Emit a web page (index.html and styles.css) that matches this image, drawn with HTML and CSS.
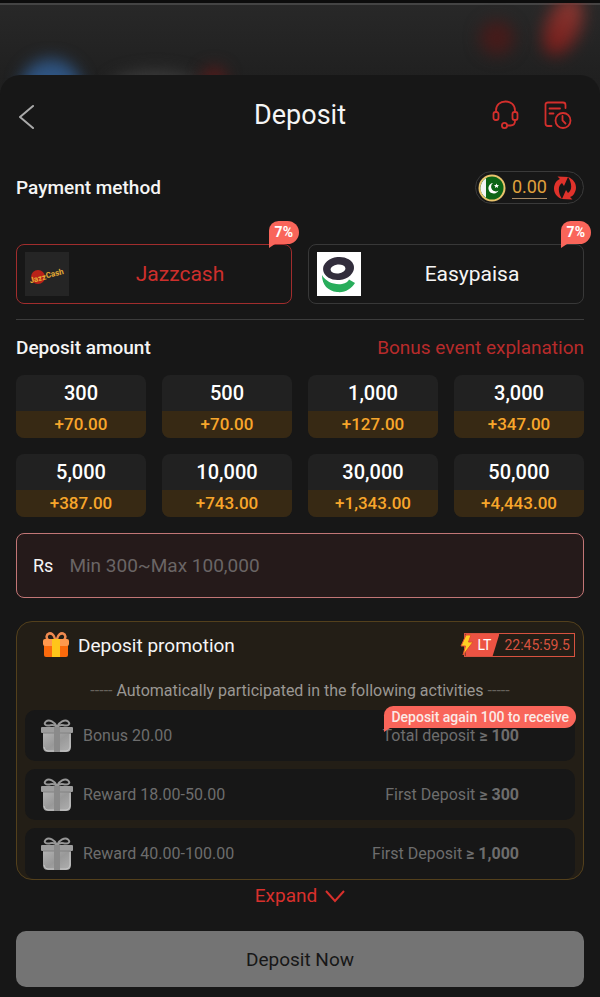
FILE: index.html
```html
<!DOCTYPE html>
<html lang="en">
<head>
    <meta charset="UTF-8">
    <meta name="viewport" content="width=device-width, initial-scale=1.0">
    <title>Deposit</title>
    <link rel="stylesheet" href="styles.css">
</head>
<body>
    <!-- Shared drawings -->
    <svg class="defs" aria-hidden="true">
        <defs>
            <linearGradient id="silver" x1="0" y1="0" x2="1" y2="1">
                <stop offset="0" stop-color="#b4b4b4"/>
                <stop offset="0.5" stop-color="#999"/>
                <stop offset="1" stop-color="#b0b0b0"/>
            </linearGradient>
        </defs>
        <symbol id="gift-grey" viewBox="0 0 32 34">
            <path d="M16 8C14 3 8 0 5 2.500C2 5 5 7 8 6.500C11 6 13 5 16 8C18 3 24 0 27 2.500C30 5 27 7 24 6.500C21 6 19 5 16 8Z" fill="none" stroke="#979797" stroke-width="2"/>
            <path d="M2 13H30V28Q30 33 25 33H7Q2 33 2 28Z" fill="url(#silver)"/>
            <path d="M3 28Q3.500 32 7 32H25Q28.500 32 29 28V15" fill="none" stroke="#c6c6c6" stroke-width="1"/>
            <rect x="0" y="8" width="32" height="6" rx="1" fill="#9d9d9d"/>
            <path d="M2 14H30" stroke="#828282" stroke-width="1"/>
            <rect x="13" y="8" width="6" height="25" fill="#8a8a8a"/>
        </symbol>
    </svg>

    <div class="backdrop" aria-hidden="true">
        <span class="glow glow-blue"></span>
        <span class="glow glow-grey"></span>
        <span class="glow glow-small"></span>
        <span class="glow glow-red"></span>
        <span class="glow glow-bright"></span>
    </div>

    <main class="sheet">
        <header class="top">
            <button class="icon-btn back" type="button" aria-label="Back">
                <svg width="20" height="28" viewBox="0 0 20 28"><path d="M17 5L4 16L17 27" fill="none" stroke="#aaa" stroke-width="2" stroke-linecap="round" stroke-linejoin="round"/></svg>
            </button>
            <h1>Deposit</h1>
            <div class="top-actions">
                <button class="icon-btn" type="button" aria-label="Support">
                    <svg width="28" height="30" viewBox="0 0 28 30" fill="none" stroke="#d32f2c" stroke-width="1.800" stroke-linecap="round">
                        <path d="M4 12V10.500C4 5 8 1.500 13.500 1.500S23 5 23 10.500V12"/>
                        <rect x="1.500" y="12" width="5" height="8" rx="2"/>
                        <rect x="20.500" y="12" width="5" height="8" rx="2"/>
                        <path d="M23 20V21Q23 25.500 18.500 25.500H15.500"/>
                        <circle cx="12.500" cy="25.500" r="2.600"/>
                    </svg>
                </button>
                <button class="icon-btn" type="button" aria-label="History">
                    <svg width="28" height="30" viewBox="0 0 28 30" fill="none" stroke="#d32f2c" stroke-width="1.800" stroke-linecap="round">
                        <path d="M7.500 26H4Q1.500 26 1.500 23.500V4.500Q1.500 2.500 4 2.500H19Q21.500 2.500 21.500 5V8"/>
                        <path d="M5.500 8.500H16M5.500 13.500H9.500"/>
                        <circle cx="19" cy="20.500" r="7.500"/>
                        <path d="M18.500 16V20.500L21.500 23.500"/>
                    </svg>
                </button>
            </div>
        </header>

        <section class="row payment-head">
            <h2>Payment method</h2>
            <div class="balance">
                <svg width="28" height="28" viewBox="0 0 28 28">
                    <circle cx="14" cy="14" r="13.500" fill="#e9c36c"/>
                    <circle cx="14" cy="14" r="11.500" fill="#0c6416"/>
                    <path d="M8 4.200A11.500 11.500 0 0 0 8 23.800Z" fill="#f4f4f4"/>
                    <path d="M15 9A5.300 5.300 0 1 0 20.500 16.500A4.600 4.600 0 1 1 15 9Z" fill="#fff"/>
                    <path d="M18.500 9.500L19.200 11.100L21 11.300L19.700 12.400L20 14L18.500 13.100L17 14L17.300 12.400L16 11.300L17.800 11.100Z" fill="#fff"/>
                </svg>
                <span class="balance-value">0.00</span>
                <button class="icon-btn" type="button" aria-label="Refresh balance">
                    <svg width="24" height="24" viewBox="0 0 24 24" fill="#e0322b">
                        <path id="arrow" d="M9 23C1 20 -1 12 3 6C4 4.500 5.500 3.500 7 3L4.500 0.500L15 1L11 10L9 7C4.500 10 5 17 9 23Z"/>
                        <use href="#arrow" transform="rotate(180 12 12)"/>
                    </svg>
                </button>
            </div>
        </section>

        <section class="methods">
            <button class="method selected" type="button">
                <svg class="logo" width="44" height="44" viewBox="0 0 44 44">
                    <rect width="44" height="44" fill="#252525"/>
                    <ellipse cx="13" cy="25" rx="7" ry="7" fill="#b92219"/>
                    <g transform="rotate(-14 22 24)" font-family="Roboto, sans-serif" font-weight="700" fill="#e6ad35">
                        <text x="4" y="27" font-size="8">Jazz</text>
                        <text x="21" y="26" font-size="8">Cash</text>
                    </g>
                </svg>
                <span class="method-name">Jazzcash</span>
                <span class="rate">7%</span>
            </button>
            <button class="method" type="button">
                <svg class="logo" width="44" height="44" viewBox="0 0 44 44">
                    <rect width="44" height="44" fill="#fff"/>
                    <ellipse cx="21.500" cy="16.500" rx="15.500" ry="11.500" fill="#322d3c" transform="rotate(-6 21 16)"/>
                    <ellipse cx="21" cy="17" rx="7.500" ry="4.500" fill="#fff" transform="rotate(-6 21 17)"/>
                    <path fill="#28ad5b" d="M5 23C9 30 17 33 25 32C29 31 31 29.500 32 27.500L38 31C34 37 28 41 20 40C11 39 5 33 5 23Z"/>
                </svg>
                <span class="method-name">Easypaisa</span>
                <span class="rate">7%</span>
            </button>
        </section>

        <section class="row amount-head">
            <h2>Deposit amount</h2>
            <a href="#">Bonus event explanation</a>
        </section>

        <section class="amounts">
            <button class="amount" type="button"><span>300</span><span class="extra">+70.00</span></button>
            <button class="amount" type="button"><span>500</span><span class="extra">+70.00</span></button>
            <button class="amount" type="button"><span>1,000</span><span class="extra">+127.00</span></button>
            <button class="amount" type="button"><span>3,000</span><span class="extra">+347.00</span></button>
            <button class="amount" type="button"><span>5,000</span><span class="extra">+387.00</span></button>
            <button class="amount" type="button"><span>10,000</span><span class="extra">+743.00</span></button>
            <button class="amount" type="button"><span>30,000</span><span class="extra">+1,343.00</span></button>
            <button class="amount" type="button"><span>50,000</span><span class="extra">+4,443.00</span></button>
        </section>

        <div class="amount-field">
            <label for="amount">Rs</label>
            <input type="text" id="amount" inputmode="numeric" placeholder="Min 300~Max 100,000">
        </div>

        <section class="promo">
            <div class="promo-head">
                <svg width="26" height="26" viewBox="0 0 26 26">
                    <path d="M12 7C11 2 8 1 6 1.500C3 2.500 3 6 5 8M14 7C15 2 18 1 20 1.500C23 2.500 23 6 21 8" fill="none" stroke="#ef8a50" stroke-width="2.500"/>
                    <rect x="1" y="12" width="24" height="13" rx="2" fill="#fb6a0c"/>
                    <rect x="0" y="7" width="26" height="7" rx="2" fill="#ff984d"/>
                    <rect x="9" y="7" width="8" height="18" fill="#ffc61a"/>
                </svg>
                <h3>Deposit promotion</h3>
                <div class="timer">
                    <span class="timer-tag">LT</span>
                    <span class="timer-value">22:45:59.5</span>
                    <svg class="bolt" width="14" height="22" viewBox="0 0 14 22"><path d="M6 1H11L8.500 8H13L3 21L5.500 12H1Z" fill="#ffcf24" stroke="#e2512f" stroke-width="1"/></svg>
                </div>
            </div>
            <p class="promo-note"><span class="dash">-----</span> Automatically participated in the following activities <span class="dash">-----</span></p>
            <ul class="offers">
                <li>
                    <svg width="32" height="34"><use href="#gift-grey"/></svg>
                    <span>Bonus 20.00</span>
                    <span class="condition">Total deposit <b>≥ 100</b></span>
                    <span class="hint">Deposit again 100 to receive</span>
                </li>
                <li>
                    <svg width="32" height="34"><use href="#gift-grey"/></svg>
                    <span>Reward 18.00-50.00</span>
                    <span class="condition">First Deposit <b>≥ 300</b></span>
                </li>
                <li>
                    <svg width="32" height="34"><use href="#gift-grey"/></svg>
                    <span>Reward 40.00-100.00</span>
                    <span class="condition">First Deposit <b>≥ 1,000</b></span>
                </li>
            </ul>
        </section>

        <button class="expand" type="button">
            Expand
            <svg width="20" height="14" viewBox="0 0 20 14"><path d="M1 2L10 12L19 2" fill="none" stroke="#d8302c" stroke-width="2"/></svg>
        </button>

        <button class="submit" type="button">Deposit Now</button>
    </main>
</body>
</html>
```

FILE: styles.css
```css
* {
    box-sizing: border-box;
}

body {
    margin: 0;
    min-height: 100vh;
    display: flex;
    flex-direction: column;
    background: #232323;
    color: #f5f5f5;
    font-family: Roboto, sans-serif;
    font-size: 19px;
}

h1, h2, h3, p, ul {
    margin: 0;
    padding: 0;
}

button {
    padding: 0;
    border: none;
    background: none;
    color: inherit;
    font: inherit;
    cursor: pointer;
}

svg {
    display: block;
    flex: none;
}

a {
    color: #b72b2b;
    text-decoration: none;
}

.defs {
    position: absolute;
    width: 0;
    height: 0;
}

/* Blurred page behind the sheet */
.backdrop {
    position: relative;
    height: 95px;
    margin-bottom: -20px;
    overflow: hidden;
    border-top: 3px solid #0c0c0c;
    background: linear-gradient(#444 0, #444 2px, #282828 2px, #1e1e1e 100%);
}

.glow {
    position: absolute;
    border-radius: 50%;
    filter: blur(8px);
}

.glow-blue {
    left: 20px;
    top: 56px;
    width: 62px;
    height: 60px;
    background: #2f5583;
}

.glow-grey {
    left: 110px;
    top: 68px;
    width: 90px;
    height: 30px;
    background: #3c3c3c;
}

.glow-small {
    left: 202px;
    top: 64px;
    width: 24px;
    height: 24px;
    background: #561b1b;
}

.glow-red {
    right: 86px;
    top: 18px;
    width: 34px;
    height: 34px;
    background: #461b1a;
}

.glow-bright {
    right: 20px;
    top: -8px;
    width: 34px;
    height: 62px;
    background: linear-gradient(#8a3b35, #741a18);
    transform: rotate(24deg);
}

.sheet {
    position: relative;
    flex: 1;
    padding: 16px 16px 10px;
    border-radius: 20px 20px 0 0;
    background: #171717;
}

.top {
    display: grid;
    grid-template-columns: 1fr auto 1fr;
    align-items: center;
    height: 48px;
}

.top h1 {
    font-size: 27px;
    font-weight: 400;
}

.back {
    justify-self: start;
}

.top-actions {
    display: flex;
    justify-content: flex-end;
    gap: 24px;
    padding-right: 12px;
}

.row {
    display: flex;
    align-items: center;
    justify-content: space-between;
}

h2 {
    font-size: 19px;
    font-weight: 500;
}

.payment-head {
    margin-top: 32px;
}

.balance {
    display: flex;
    align-items: center;
    gap: 6px;
    height: 33px;
    padding: 0 6px 0 2px;
    border: 1px solid #3a3a3a;
    border-radius: 17px;
}

.balance-value {
    border-bottom: 1px solid #a98c68;
    color: #e0a13c;
    font-size: 18px;
    line-height: 22px;
}

.methods {
    display: grid;
    grid-template-columns: 1fr 1fr;
    gap: 16px;
    margin-top: 40px;
    padding-bottom: 15px;
    border-bottom: 1px solid #3c3c3c;
}

.method {
    position: relative;
    display: flex;
    align-items: center;
    height: 60px;
    padding-left: 8px;
    border: 1px solid #383838;
    border-radius: 8px;
}

.method-name {
    flex: 1;
    font-size: 21px;
    line-height: 24px;
    text-align: center;
}

.selected {
    border-color: #a12d2d;
    color: #cd2f2c;
}

.rate {
    position: absolute;
    top: -24px;
    right: -8px;
    padding: 0 6px;
    border-radius: 10px 12px 12px 0;
    background: #f9655a;
    color: #fff;
    font-size: 14px;
    font-weight: 700;
    line-height: 23px;
}

.rate::after, .hint::after {
    content: "";
    position: absolute;
    left: 0;
    top: 100%;
    border-top: 4px solid #f9655a;
    border-right: 6px solid transparent;
}

.amount-head {
    margin-top: 16px;
    line-height: 24px;
}

.amounts {
    display: grid;
    grid-template-columns: repeat(4, 1fr);
    gap: 16px;
    margin-top: 15px;
}

.amount {
    overflow: hidden;
    border-radius: 8px;
    background: #212121;
    color: #fff;
    font-size: 20px;
    font-weight: 500;
    line-height: 36px;
}

.amount span {
    display: block;
}

.amount .extra {
    background: #372914;
    color: #f7a62b;
    font-size: 17px;
    line-height: 27px;
}

.amount-field {
    display: flex;
    align-items: center;
    gap: 16px;
    height: 65px;
    margin-top: 16px;
    padding: 0 16px;
    border: 1px solid #c27676;
    border-radius: 8px;
    background: #251a1a;
}

.amount-field label {
    font-size: 18px;
}

.amount-field input {
    flex: 1;
    min-width: 0;
    padding: 0;
    border: none;
    outline: none;
    background: none;
    color: #fff;
    font: inherit;
}

.amount-field input::placeholder {
    color: #6a6565;
    opacity: 1;
}

.promo {
    margin-top: 23px;
    padding: 0 8px;
    overflow: hidden;
    border: 1px solid #53401c;
    border-radius: 16px;
    background: #231e16;
}

.promo-head {
    display: flex;
    align-items: center;
    gap: 9px;
    height: 46px;
    padding-left: 18px;
}

.promo-head h3 {
    flex: 1;
    font-size: 19px;
    font-weight: 400;
}

.timer {
    position: relative;
    display: flex;
    height: 24px;
    border: 1px solid #d7523f;
    color: #d7523f;
    font-size: 14px;
    line-height: 22px;
}

.timer-tag {
    padding: 0 8px 0 12px;
    background: #ec5343;
    clip-path: polygon(0 0, 100% 0, 80% 100%, 0 100%);
    color: #fff;
}

.timer-value {
    padding: 0 4px 0 5px;
}

.bolt {
    position: absolute;
    left: -5px;
    top: 0;
}

.promo-note {
    padding: 13px 0 9px;
    color: #9a9793;
    font-size: 16px;
    line-height: 20px;
    text-align: center;
}

.dash {
    color: #66625c;
}

.offers {
    display: grid;
    gap: 8px;
    list-style: none;
    color: #6d6d6d;
    font-size: 16px;
}

.offers li {
    position: relative;
    display: flex;
    align-items: center;
    gap: 10px;
    height: 51px;
    padding: 0 56px 0 16px;
    border-radius: 10px;
    background: #171717;
}

.condition {
    margin-left: auto;
}

.condition b {
    font-weight: 700;
}

.hint {
    position: absolute;
    top: -4px;
    right: -1px;
    padding: 0 7px;
    border-radius: 10px 12px 12px 0;
    background: #f9655a;
    color: #fbeae6;
    font-size: 14px;
    font-weight: 500;
    line-height: 22px;
}

.expand {
    display: flex;
    align-items: center;
    gap: 8px;
    margin: 3px auto 0;
    color: #d8302c;
    line-height: 26px;
}

.submit {
    display: block;
    width: 100%;
    height: 56px;
    margin-top: 22px;
    border-radius: 10px;
    background: #747474;
    color: #171717;
}
```
